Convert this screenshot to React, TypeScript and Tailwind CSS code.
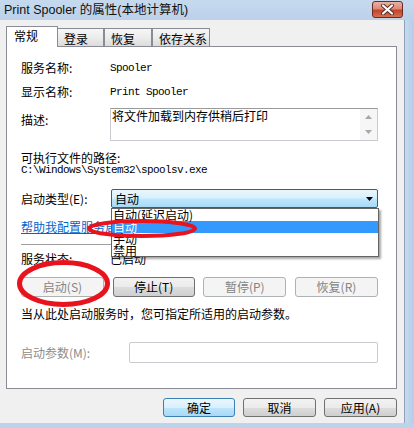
import type { ReactNode } from "react";

const mono = "font-['Liberation_Mono',monospace] text-[11px] tracking-[-0.6px]";

function WinButton({ children, kind = "normal", width }: { children: ReactNode; kind?: "normal" | "disabled" | "default"; width: string }) {
  const look =
    kind === "disabled"
      ? "border-[#adb2b5] bg-[#f4f4f4] text-[#838383]"
      : kind === "default"
        ? "border-[#3c7fb1] bg-[linear-gradient(#eaf6fd_0%,#d9f0fc_50%,#bee6fd_51%,#a7d9f5_100%)] text-black"
        : "border-[#707070] bg-[linear-gradient(#f2f2f2_0%,#ebebeb_50%,#dddddd_51%,#cfcfcf_100%)] text-black";
  return (
    <div className={`flex h-full items-center justify-center rounded-[3px] border text-[12px] leading-none ${look} ${width}`}>
      {children}
    </div>
  );
}

function CloseButton() {
  return (
    <div className="ml-auto mr-[11px] mt-px flex h-[17px] w-[31px] items-center justify-center rounded-[3px] border border-[#6d2a22] bg-[linear-gradient(#eab0a2_0%,#dc8a76_45%,#c4432e_55%,#d5704f_100%)]">
      <svg width="15" height="11" viewBox="0 0 15 11">
        <path d="M3 1.5 L12 9.5 M12 1.5 L3 9.5" stroke="#5a2a24" strokeWidth="4" strokeLinecap="round" />
        <path d="M3 1.5 L12 9.5 M12 1.5 L3 9.5" stroke="#ffffff" strokeWidth="2.2" strokeLinecap="round" />
      </svg>
    </div>
  );
}

function Tab({ label, active, width, extra = "" }: { label: string; active?: boolean; width: string; extra?: string }) {
  if (active) {
    return (
      <div className={`-mb-px h-[21px] border border-b-0 border-[#898c95] bg-white pl-[7px] pt-px text-[12px] leading-[16px] ${width} ${extra}`}>
        {label}
      </div>
    );
  }
  return (
    <div className={`h-[18px] border border-b-0 border-[#898c95] bg-[linear-gradient(#f6f6f6_0%,#ececec_50%,#dcdcdc_100%)] pl-[6px] pt-[2px] text-[12px] leading-[16px] ${width} ${extra}`}>
      {label}
    </div>
  );
}

export default function App() {
  return (
    <div className="relative flex h-[428px] w-[414px] flex-col overflow-hidden bg-[#bcd3ec] font-['Noto_Sans_CJK_SC','Liberation_Sans',sans-serif] text-[12px] text-black">
      {/* title bar */}
      <div className="flex h-[20px] shrink-0 items-start bg-[linear-gradient(#c6d9ee,#bcd1ea)]">
        <span className="pl-[4px] font-['Liberation_Sans','Noto_Sans_CJK_SC',sans-serif] text-[12.5px] leading-[20px] text-[#111]">
          Print Spooler 的属性(本地计算机)
        </span>
        <CloseButton />
      </div>

      <div className="flex h-[403px] shrink-0">
        <div className="flex w-[405px] flex-col border-r border-[#8da1bb] bg-[#f0f0f0]">
          {/* tabs */}
          <div className="relative z-10 mt-[6px] flex h-[20px] items-end pl-[6px]">
            <Tab label="常规" active width="w-[52px]" />
            <Tab label="登录" width="w-[47px]" extra="-ml-px" />
            <Tab label="恢复" width="w-[48px]" />
            <Tab label="依存关系" width="w-[58px]" />
          </div>

          {/* panel */}
          <div className="ml-[6px] flex h-[343px] w-[391px] flex-col border border-[#898c95] bg-white pl-[14px] pr-[18px]">
            <div className="mt-[13px] flex h-[16px] items-center">
              <span className="w-[89px]">服务名称:</span>
              <span className={mono}>Spooler</span>
            </div>
            <div className="mt-[8px] flex h-[16px] items-center">
              <span className="w-[89px]">显示名称:</span>
              <span className={mono}>Print Spooler</span>
            </div>
            <div className="mt-[8px] flex h-[33px]">
              <span className="w-[89px] pt-[5px] leading-[14px]">描述:</span>
              <div className="flex flex-1 border border-[#c9cbd0] border-t-[#9a9a9a]">
                <div className="flex-1 pl-px leading-[14px]">将文件加载到内存供稍后打印</div>
                <div className="flex w-[17px] flex-col items-center bg-[#f6f6f6] pt-[6px]">
                  <svg width="7" height="4" viewBox="0 0 7 4"><path d="M0 4 L3.5 0 L7 4 Z" fill="#a8a8a8" /></svg>
                  <svg className="mt-[11px]" width="7" height="4" viewBox="0 0 7 4"><path d="M0 0 L7 0 L3.5 4 Z" fill="#a8a8a8" /></svg>
                </div>
              </div>
            </div>
            <div className="mt-[10px] h-[13px] leading-[13px]">可执行文件的路径:</div>
            <div className={`h-[12px] leading-[12px] ${mono}`}>C:\Windows\System32\spoolsv.exe</div>

            {/* startup type + open list */}
            <div className="relative z-10 mt-[13px] flex h-[19px] items-center">
              <span className="w-[90px]">启动类型(E):</span>
              <div className="flex h-full flex-1 items-center rounded-[2px] border border-[#2c628b] bg-[linear-gradient(#eaf6fd_0%,#d9f0fc_45%,#bee6fd_55%,#a7d9f5_100%)] pl-[3px] pr-[4px]">
                <span className="flex-1 leading-[14px]">自动</span>
                <svg width="7" height="4" viewBox="0 0 7 4"><path d="M0 0 L7 0 L3.5 4 Z" fill="#000" /></svg>
              </div>
              <div className="absolute left-[90px] top-[19px] w-[268px] border border-[#646464] bg-white shadow-[2px_2px_2px_rgba(0,0,0,0.35)]">
                <div className="h-[12px] pl-px leading-[12px]">自动(延迟启动)</div>
                <div className="h-[12px] bg-[#3399ff] pl-px leading-[12px] text-white">自动</div>
                <div className="h-[12px] pl-px leading-[12px]">手动</div>
                <div className="h-[11px] pl-px leading-[12px]">禁用</div>
              </div>
            </div>

            <div className="mt-[12px] h-[14px] leading-[14px] text-[#0066cc] underline">帮助我配置服务启动选项。</div>
            <div className="mt-[10px] h-px bg-[#a0a0a0]" />

            <div className="mt-[7px] flex h-[14px] items-center">
              <span className="w-[89px]">服务状态:</span>
              <span>已启动</span>
            </div>

            <div className="mt-[11px] flex h-[20px] justify-between">
              <WinButton kind="disabled" width="w-[83px]">启动(S)</WinButton>
              <WinButton width="w-[82px]">停止(T)</WinButton>
              <WinButton kind="disabled" width="w-[83px]">暂停(P)</WinButton>
              <WinButton kind="disabled" width="w-[83px]">恢复(R)</WinButton>
            </div>

            <div className="mt-[10px] h-[14px] leading-[14px]">当从此处启动服务时，您可指定所适用的启动参数。</div>

            <div className="mt-[21px] flex h-[21px] items-center">
              <span className="w-[108px] text-[#8d8d8d]">启动参数(M):</span>
              <div className="h-full flex-1 rounded-[2px] border border-[#c9cbd0] bg-white" />
            </div>
          </div>

          {/* dialog buttons */}
          <div className="mt-[9px] flex h-[19px] justify-end gap-[8px] pr-[7px]">
            <WinButton kind="default" width="w-[72px]">确定</WinButton>
            <WinButton width="w-[73px]">取消</WinButton>
            <WinButton width="w-[73px]">应用(A)</WinButton>
          </div>
        </div>
        <div className="flex-1 bg-[linear-gradient(90deg,#c6d9ee,#b6cde8)]" />
      </div>
      <div className="flex-1 bg-[#bcd3ec]" />

      {/* red annotation marks */}
      <svg className="pointer-events-none absolute left-0 top-0 z-20" width="414" height="428">
        <ellipse cx="63.5" cy="283.5" rx="44" ry="21" fill="none" stroke="#e8131d" strokeWidth="5" />
        <ellipse cx="142" cy="228.5" rx="53" ry="7.5" fill="none" stroke="#e8131d" strokeWidth="4" />
      </svg>
    </div>
  );
}
